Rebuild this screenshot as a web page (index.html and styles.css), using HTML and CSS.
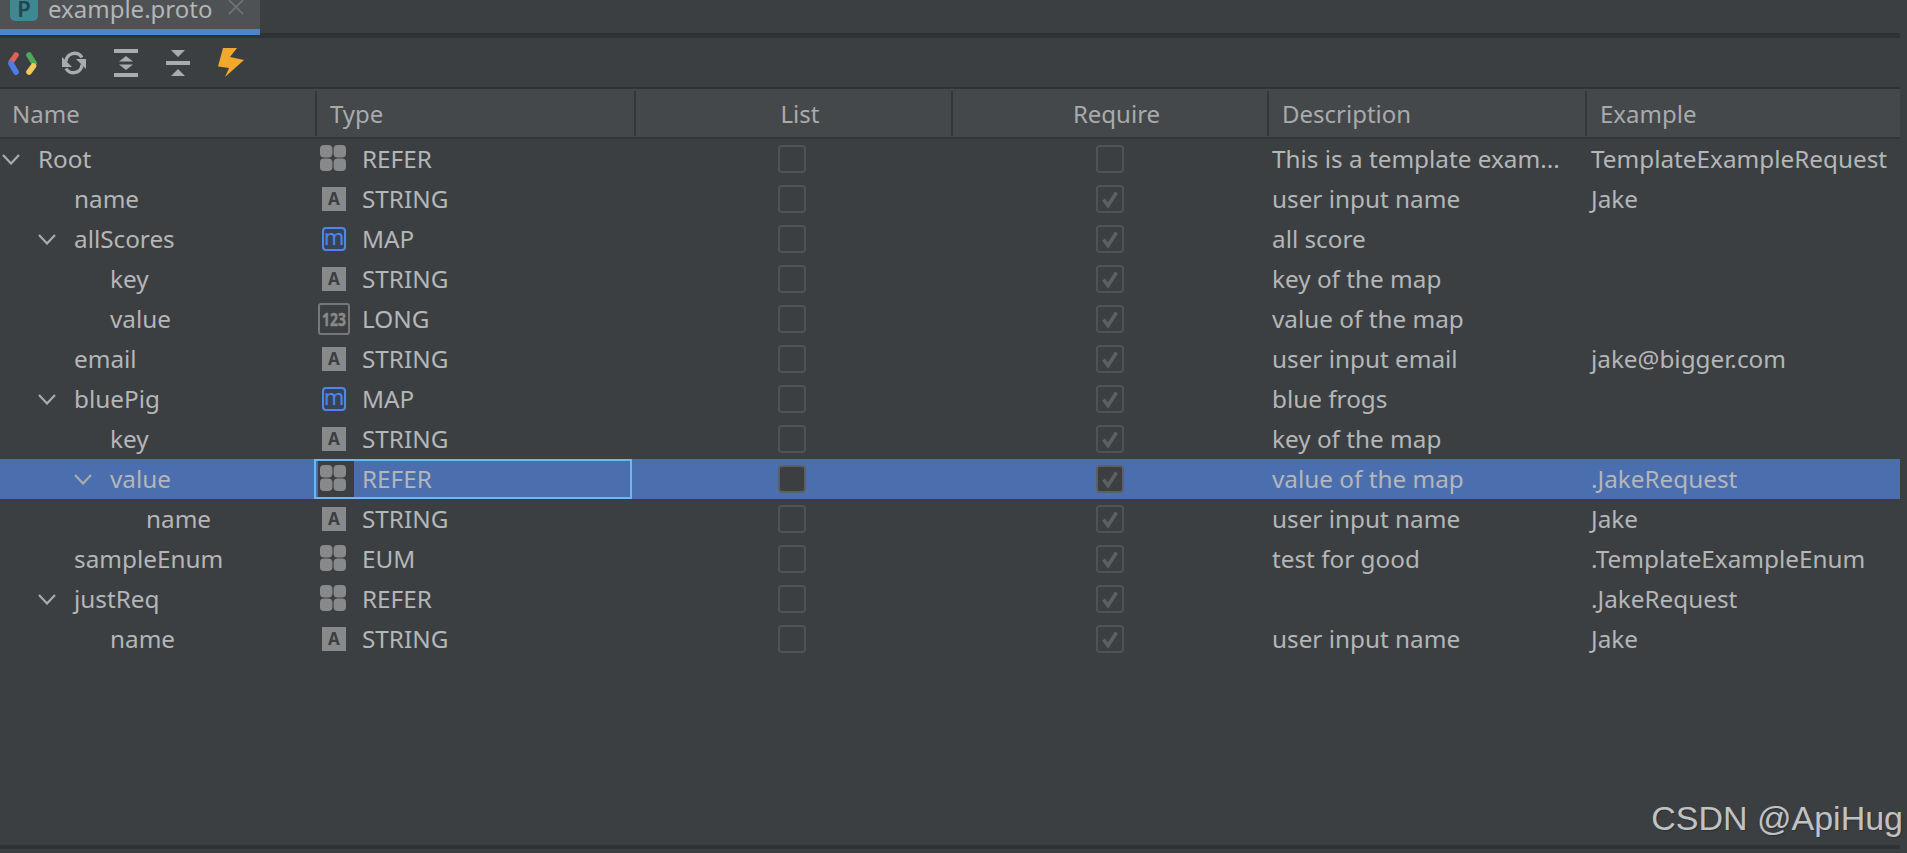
FILE: index.html
```html
<!DOCTYPE html>
<html lang="en">
<head>
<meta charset="utf-8">
<title>example.proto</title>
<link rel="stylesheet" href="styles.css">
</head>
<body>
<svg class="defs" width="0" height="0" aria-hidden="true">
  <defs>
    <symbol id="chev" viewBox="0 0 18 11"><path d="M1 1 L9 9.5 L17 1" fill="none" stroke="#a9abad" stroke-width="2.2"/></symbol>
    <symbol id="i-grid" viewBox="0 0 36 36">
      <rect x="2" y="4" width="12.4" height="12.4" rx="4" fill="#87898b"/><rect x="15.6" y="4" width="12.4" height="12.4" rx="4" fill="#87898b"/>
      <rect x="2" y="17.6" width="12.4" height="12.4" rx="4" fill="#87898b"/><rect x="15.6" y="17.6" width="12.4" height="12.4" rx="4" fill="#87898b"/>
    </symbol>
    <symbol id="i-check" viewBox="0 0 24 24"><path d="M5.5 12.5 L10 18.5 L18.5 5.5" fill="none" stroke="#5d6062" stroke-width="3.6"/></symbol>
  </defs>
</svg>
<div class="app">
  <div class="tabbar">
    <div class="tab">
      <span class="tab-icon">P</span>
      <span class="tab-name">example.proto</span>
      <svg class="tab-close" width="16" height="15" viewBox="0 0 16 15"><path d="M1 0 L15 14 M15 0 L1 14" stroke="#6e7173" stroke-width="1.8"/></svg>
    </div>
  </div>
  <div class="toolbar">
    <svg class="tool t-google" width="30" height="24" viewBox="0 0 30 24">
      <path d="M8 3 L3.5 9.5" stroke="#e0605a" stroke-width="5.6" stroke-linecap="round"/>
      <path d="M3 11.5 L8 20" stroke="#4a7de8" stroke-width="5.6" stroke-linecap="round"/>
      <path d="M21 3 L26 11" stroke="#4ea85a" stroke-width="5.6" stroke-linecap="round"/>
      <path d="M25.5 14 L21 20" stroke="#f4c95a" stroke-width="5.6" stroke-linecap="round"/>
    </svg>
    <svg class="tool t-sync" width="24" height="24" viewBox="0 0 24 24">
      <path d="M4 10.5 A8.6 8.6 0 0 1 20 6.5" fill="none" stroke="#a9abad" stroke-width="3.4"/>
      <path d="M0 6 L0 16 L10 16 Z" fill="#a9abad"/>
      <path d="M20 13.5 A8.6 8.6 0 0 1 4 17.5" fill="none" stroke="#a9abad" stroke-width="3.4"/>
      <path d="M24 18 L24 8 L14 8 Z" fill="#a9abad"/>
    </svg>
    <svg class="tool t-expand" width="24" height="28" viewBox="0 0 24 28">
      <rect width="24" height="4" fill="#a9abad"/><rect y="24" width="24" height="4" fill="#a9abad"/>
      <path d="M12 7 L19 12.5 L5 12.5 Z M5 15.5 L19 15.5 L12 21 Z" fill="#a9abad"/>
    </svg>
    <svg class="tool t-collapse" width="24" height="26" viewBox="0 0 24 26">
      <rect y="11" width="24" height="4" fill="#a9abad"/>
      <path d="M5 0 L19 0 L12 7 Z M12 19 L19 26 L5 26 Z" fill="#a9abad"/>
    </svg>
    <svg class="tool t-bolt" width="26" height="29" viewBox="0 0 26 29">
      <path d="M5 0 L19 0 L12 9 L26 12 L7 29 L11 20 L0 18.5 Z" fill="#f2a72e"/>
    </svg>
  </div>
  <div class="head">
    <div class="hcell">Name</div>
    <div class="hcell sep hpad">Type</div>
    <div class="hcell sep hmid">List</div>
    <div class="hcell sep hmid">Require</div>
    <div class="hcell sep hpad">Description</div>
    <div class="hcell sep hpad">Example</div>
  </div>
  <div class="body">
    <div class="row">
      <div class="c-name"><svg class="twist" width="18" height="11"><use href="#chev"/></svg><span>Root</span></div>
      <div class="c-type"><span class="ico"><svg width="36" height="36"><use href="#i-grid"/></svg></span>REFER</div>
      <div class="c-box"><span class="cb"></span></div>
      <div class="c-box"><span class="cb"></span></div>
      <div class="c-desc">This is a template exam...</div>
      <div class="c-ex">TemplateExampleRequest</div>
    </div>
    <div class="row">
      <div class="c-name d1"><span class="leaf"></span><span>name</span></div>
      <div class="c-type"><span class="ico"><svg width="36" height="36" viewBox="0 0 36 36"><rect x="4" y="6" width="24" height="24" fill="#87898b"/><text class="glyph-a" x="16" y="24">A</text></svg></span>STRING</div>
      <div class="c-box"><span class="cb"></span></div>
      <div class="c-box"><span class="cb"><svg width="24" height="24"><use href="#i-check"/></svg></span></div>
      <div class="c-desc">user input name</div>
      <div class="c-ex">Jake</div>
    </div>
    <div class="row">
      <div class="c-name d1"><svg class="twist" width="18" height="11"><use href="#chev"/></svg><span>allScores</span></div>
      <div class="c-type"><span class="ico"><svg width="36" height="36" viewBox="0 0 36 36"><rect x="5" y="7" width="22" height="22" rx="3" fill="#2f4a7a" fill-opacity=".35" stroke="#4f86e8" stroke-width="2"/><text class="glyph-m" x="16" y="24">m</text></svg></span>MAP</div>
      <div class="c-box"><span class="cb"></span></div>
      <div class="c-box"><span class="cb"><svg width="24" height="24"><use href="#i-check"/></svg></span></div>
      <div class="c-desc">all score</div>
      <div class="c-ex"></div>
    </div>
    <div class="row">
      <div class="c-name d2"><span class="leaf"></span><span>key</span></div>
      <div class="c-type"><span class="ico"><svg width="36" height="36" viewBox="0 0 36 36"><rect x="4" y="6" width="24" height="24" fill="#87898b"/><text class="glyph-a" x="16" y="24">A</text></svg></span>STRING</div>
      <div class="c-box"><span class="cb"></span></div>
      <div class="c-box"><span class="cb"><svg width="24" height="24"><use href="#i-check"/></svg></span></div>
      <div class="c-desc">key of the map</div>
      <div class="c-ex"></div>
    </div>
    <div class="row">
      <div class="c-name d2"><span class="leaf"></span><span>value</span></div>
      <div class="c-type"><span class="ico"><svg width="36" height="36" viewBox="0 0 36 36"><rect x="1" y="3" width="30" height="30" rx="2" fill="none" stroke="#757779" stroke-width="2"/><text class="glyph-n" x="4" y="24.5" textLength="24" lengthAdjust="spacingAndGlyphs">123</text></svg></span>LONG</div>
      <div class="c-box"><span class="cb"></span></div>
      <div class="c-box"><span class="cb"><svg width="24" height="24"><use href="#i-check"/></svg></span></div>
      <div class="c-desc">value of the map</div>
      <div class="c-ex"></div>
    </div>
    <div class="row">
      <div class="c-name d1"><span class="leaf"></span><span>email</span></div>
      <div class="c-type"><span class="ico"><svg width="36" height="36" viewBox="0 0 36 36"><rect x="4" y="6" width="24" height="24" fill="#87898b"/><text class="glyph-a" x="16" y="24">A</text></svg></span>STRING</div>
      <div class="c-box"><span class="cb"></span></div>
      <div class="c-box"><span class="cb"><svg width="24" height="24"><use href="#i-check"/></svg></span></div>
      <div class="c-desc">user input email</div>
      <div class="c-ex">jake@bigger.com</div>
    </div>
    <div class="row">
      <div class="c-name d1"><svg class="twist" width="18" height="11"><use href="#chev"/></svg><span>bluePig</span></div>
      <div class="c-type"><span class="ico"><svg width="36" height="36" viewBox="0 0 36 36"><rect x="5" y="7" width="22" height="22" rx="3" fill="#2f4a7a" fill-opacity=".35" stroke="#4f86e8" stroke-width="2"/><text class="glyph-m" x="16" y="24">m</text></svg></span>MAP</div>
      <div class="c-box"><span class="cb"></span></div>
      <div class="c-box"><span class="cb"><svg width="24" height="24"><use href="#i-check"/></svg></span></div>
      <div class="c-desc">blue frogs</div>
      <div class="c-ex"></div>
    </div>
    <div class="row">
      <div class="c-name d2"><span class="leaf"></span><span>key</span></div>
      <div class="c-type"><span class="ico"><svg width="36" height="36" viewBox="0 0 36 36"><rect x="4" y="6" width="24" height="24" fill="#87898b"/><text class="glyph-a" x="16" y="24">A</text></svg></span>STRING</div>
      <div class="c-box"><span class="cb"></span></div>
      <div class="c-box"><span class="cb"><svg width="24" height="24"><use href="#i-check"/></svg></span></div>
      <div class="c-desc">key of the map</div>
      <div class="c-ex"></div>
    </div>
    <div class="row selected">
      <div class="c-name d2"><svg class="twist" width="18" height="11"><use href="#chev"/></svg><span>value</span></div>
      <div class="c-type focus"><span class="ico"><svg width="36" height="36"><use href="#i-grid"/></svg></span>REFER</div>
      <div class="c-box"><span class="cb"></span></div>
      <div class="c-box"><span class="cb"><svg width="24" height="24"><use href="#i-check"/></svg></span></div>
      <div class="c-desc">value of the map</div>
      <div class="c-ex">.JakeRequest</div>
    </div>
    <div class="row">
      <div class="c-name d3"><span class="leaf"></span><span>name</span></div>
      <div class="c-type"><span class="ico"><svg width="36" height="36" viewBox="0 0 36 36"><rect x="4" y="6" width="24" height="24" fill="#87898b"/><text class="glyph-a" x="16" y="24">A</text></svg></span>STRING</div>
      <div class="c-box"><span class="cb"></span></div>
      <div class="c-box"><span class="cb"><svg width="24" height="24"><use href="#i-check"/></svg></span></div>
      <div class="c-desc">user input name</div>
      <div class="c-ex">Jake</div>
    </div>
    <div class="row">
      <div class="c-name d1"><span class="leaf"></span><span>sampleEnum</span></div>
      <div class="c-type"><span class="ico"><svg width="36" height="36"><use href="#i-grid"/></svg></span>EUM</div>
      <div class="c-box"><span class="cb"></span></div>
      <div class="c-box"><span class="cb"><svg width="24" height="24"><use href="#i-check"/></svg></span></div>
      <div class="c-desc">test for good</div>
      <div class="c-ex">.TemplateExampleEnum</div>
    </div>
    <div class="row">
      <div class="c-name d1"><svg class="twist" width="18" height="11"><use href="#chev"/></svg><span>justReq</span></div>
      <div class="c-type"><span class="ico"><svg width="36" height="36"><use href="#i-grid"/></svg></span>REFER</div>
      <div class="c-box"><span class="cb"></span></div>
      <div class="c-box"><span class="cb"><svg width="24" height="24"><use href="#i-check"/></svg></span></div>
      <div class="c-desc"></div>
      <div class="c-ex">.JakeRequest</div>
    </div>
    <div class="row">
      <div class="c-name d2"><span class="leaf"></span><span>name</span></div>
      <div class="c-type"><span class="ico"><svg width="36" height="36" viewBox="0 0 36 36"><rect x="4" y="6" width="24" height="24" fill="#87898b"/><text class="glyph-a" x="16" y="24">A</text></svg></span>STRING</div>
      <div class="c-box"><span class="cb"></span></div>
      <div class="c-box"><span class="cb"><svg width="24" height="24"><use href="#i-check"/></svg></span></div>
      <div class="c-desc">user input name</div>
      <div class="c-ex">Jake</div>
    </div>
  </div>
  <div class="bottom"></div>
</div>
<div class="watermark">CSDN @ApiHug</div>
</body>
</html>
```
FILE: styles.css
```css
* { box-sizing: border-box; }
html, body { margin: 0; height: 100%; overflow: hidden; }
body {
  background: #3c3f41;
  color: #b4b6b8;
  font-family: "Noto Sans", sans-serif;
  font-size: 24.3px;
  position: relative;
}
.defs { position: absolute; }
.app { width: 1900px; height: 853px; display: flex; flex-direction: column; }

.tabbar { height: 38px; flex: none; border-bottom: 5px solid #313233; display: flex; align-items: flex-start; }
.tab {
  width: 260px; height: 35px; flex: none; background: #4e5254; border-bottom: 6px solid #4a86c8;
  display: flex; align-items: flex-start; padding-left: 10px; overflow: hidden; position: relative;
}
.tab-icon {
  width: 28px; height: 21px; background: #3f8791; border-radius: 0 0 5px 5px; color: #20464f;
  font-size: 22px; font-weight: 600; text-align: center; line-height: 17px; flex: none;
}
.tab-name { margin-left: 10px; font-size: 24px; line-height: 17px; color: #b3b5b7; }
.tab-close { margin-left: 16px; flex: none; }

.toolbar { height: 51px; flex: none; border-bottom: 2px solid #313233; display: flex; align-items: center; position: relative; }
.tool { flex: none; display: block; }
.t-google { margin-left: 8px; margin-top: 2px; }
.t-sync { margin-left: 24px; }
.t-expand { margin-left: 28px; }
.t-collapse { margin-left: 28px; }
.t-bolt { margin-left: 28px; }

.head {
  height: 50px; flex: none; background: #45484a; border-bottom: 2px solid #343638;
  display: grid; grid-template-columns: 315px 319px 317px 316px 318px 315px;
  color: #a8abad; font-size: 24px;
}
.hcell { display: flex; align-items: center; padding-left: 12px; line-height: 30px; margin-top: 2px; }
.sep { border-left: 2px solid #343638; margin-bottom: 1px; }
.hpad { padding-left: 13px; }
.hmid { justify-content: center; padding-left: 13px; }

.body { flex: 1; min-height: 0; }
.row {
  height: 40px; display: grid; grid-template-columns: 314px 318px 320px 316px 315px 317px;
  align-items: stretch;
}
.row > div { display: flex; align-items: center; white-space: nowrap; min-width: 0; padding-bottom: 2px; }
.selected { background: #4b6eaf; }

.c-name { padding-left: 2px; }
.row > .d1 { padding-left: 38px; }
.row > .d2 { padding-left: 74px; }
.row > .d3 { padding-left: 110px; }
.twist { flex: none; margin-right: 18px; margin-bottom: -2px; }
.leaf { width: 36px; flex: none; }

.c-type { padding-left: 4px; }
.ico { width: 36px; height: 36px; flex: none; margin-right: 8px; margin-bottom: -2px; display: block; }
.ico svg { display: block; }
.selected .ico { background: #3c3f41; }
.focus { box-shadow: inset 0 0 0 2px #6db7f2; }

.c-box { justify-content: center; }
.cb {
  width: 28px; height: 28px; margin-bottom: -2px; border: 2px solid #505355; border-radius: 4px;
  display: flex; align-items: center; justify-content: center;
}
.selected .cb { background: #3c3f41; border-color: #5d6062; }
.cb svg { display: block; }

.c-desc { padding-left: 4px; }
.c-ex { padding-left: 8px; }

.glyph-a { font: 700 17px "Noto Sans", sans-serif; fill: #3c3f41; text-anchor: middle; }
.glyph-m { font: 400 22px "Noto Sans", sans-serif; fill: #4f86e8; text-anchor: middle; }
.glyph-n { font: 700 18px "Noto Sans", sans-serif; fill: #87898b; stroke: #87898b; stroke-width: .5; }

.bottom { height: 8px; flex: none; border-top: 4px solid #313233; }

.watermark {
  position: absolute; right: 4px; bottom: 15px;
  font-family: "Liberation Sans", sans-serif; font-size: 34px; line-height: 40px;
  color: #c0c2c3; text-shadow: 1px 1px 1px rgba(0,0,0,.25);
}
```
